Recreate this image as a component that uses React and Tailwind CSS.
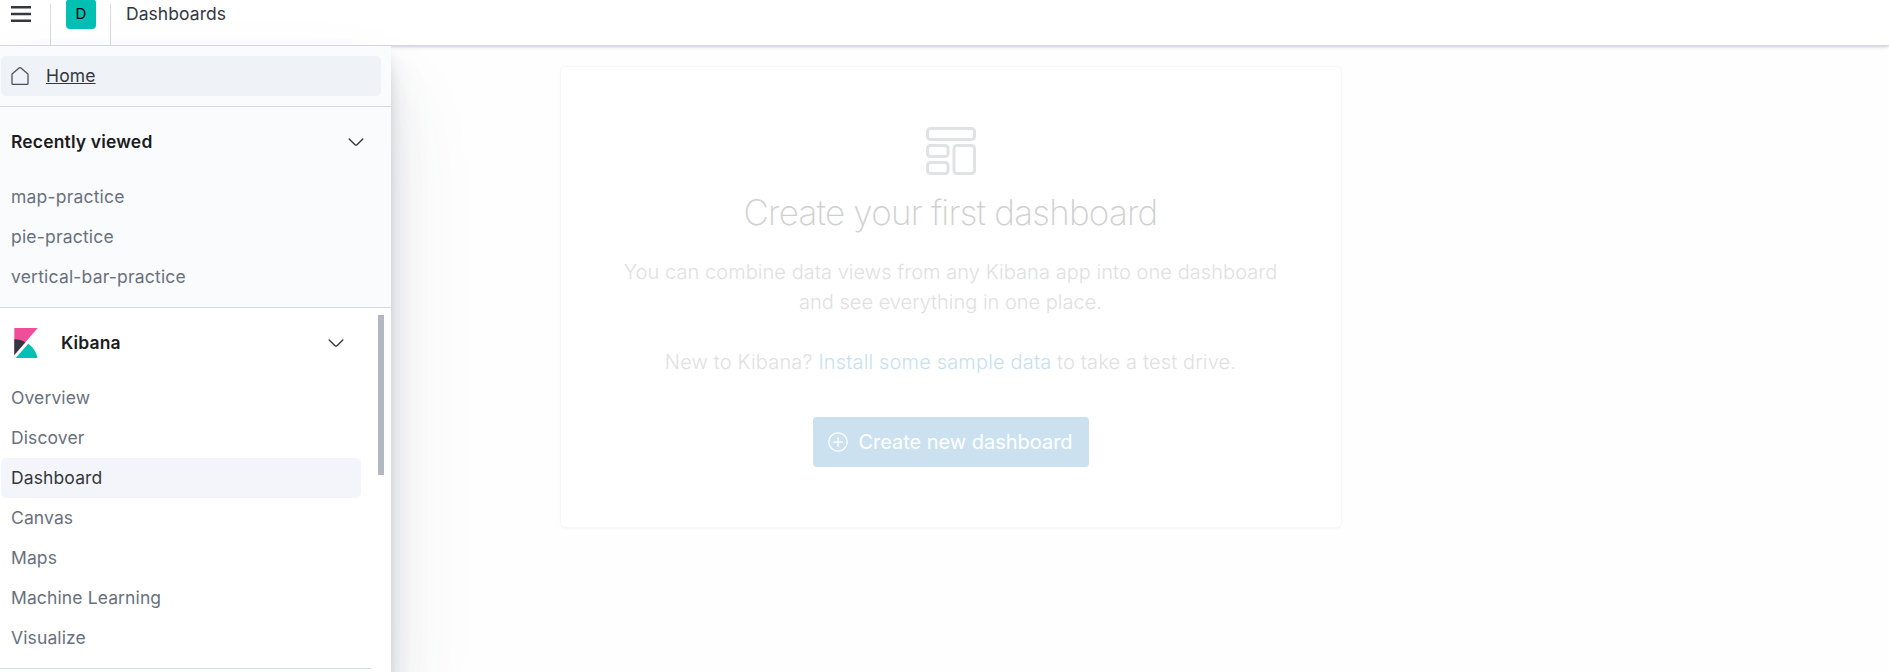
import React from "react";

const recent = ["map-practice", "pie-practice", "vertical-bar-practice"];
const apps = ["Overview", "Discover", "Dashboard", "Canvas", "Maps", "Machine Learning", "Visualize"];

function Chevron() {
  return (
    <svg className="h-5 w-5 shrink-0" viewBox="0 0 16 16" fill="#343741">
      <path fillRule="nonzero" d="M13.069 5.157 8.384 9.768a.546.546 0 0 1-.768 0L2.93 5.158a.552.552 0 0 0-.771 0 .53.53 0 0 0 0 .759l4.684 4.61c.641.631 1.672.63 2.312 0l4.684-4.61a.53.53 0 0 0 0-.76.552.552 0 0 0-.771 0Z" />
    </svg>
  );
}

function Header() {
  return (
    <header className="relative z-10 flex h-[46px] shrink-0 items-start border-b border-[#d3dae6] bg-white shadow-[0_1px_5px_-1px_rgba(152,162,179,0.4),0_2px_2px_-1px_rgba(152,162,179,0.3)]">
      <button className="flex h-[45px] w-[50px] shrink-0 items-start pl-[11px] pt-1">
        <svg className="h-5 w-5" viewBox="0 0 20 20" fill="#343741">
          <path d="M0 2h20v2.4H0zM0 8.8h20v2.4H0zM0 15.5h20v2.4H0z" />
        </svg>
      </button>
      <div className="mt-1 h-[41px] w-px bg-[#d3dae6]" />
      <div className="flex w-[59px] justify-center">
        <div className="-mt-px flex h-[30px] w-[30px] items-center justify-center rounded-[4px] bg-[#00bfb3] pl-px text-[15px] text-black">D</div>
      </div>
      <div className="mt-1 h-[41px] w-px bg-[#d3dae6]" />
      <div className="pl-[15px] text-[17.5px] leading-7 tracking-[0.06px] text-[#343741]">Dashboards</div>
    </header>
  );
}

function Sidebar() {
  return (
    <nav className="relative z-20 flex w-[391px] shrink-0 flex-col bg-white text-[17.5px] tracking-[0.12px] text-[#69707d] shadow-[0_50px_80px_0_rgba(65,78,101,0.1),0_30px_40px_0_rgba(65,78,101,0.1),0_20px_20px_0_rgba(65,78,101,0.1),0_10px_10px_0_rgba(65,78,101,0.1)]">
      <div className="h-[61px] shrink-0 border-b border-[#d3dae6] bg-[#fafbfd] pl-px pt-2.5">
        <a className="flex h-10 w-[380px] items-center rounded-[5px] bg-[#eff2f7] pl-[9px] text-[#343741]">
          <svg className="h-5 w-5" viewBox="0 0 16 16" fill="none" stroke="#4a4d57" strokeWidth="1">
            <path d="M1.6 6.5v7.4q0 .7.7.7h11.4q.7 0 .7-.7V6.5L8.5 1.4q-.5-.35-1 0Z" />
          </svg>
          <span className="pl-4 underline">Home</span>
        </a>
      </div>
      <section className="h-[201px] shrink-0 border-b border-[#d3dae6] bg-[#fafbfd]">
        <div className="flex h-[70px] items-center justify-between pl-[11px] pr-[25px] font-semibold tracking-[0.16px] text-[#1a1c21]">
          <h3>Recently viewed</h3>
          <Chevron />
        </div>
        <ul className="tracking-[0.2px]">
          {recent.map((r) => (
            <li key={r} className="flex h-10 items-center pl-[11px]">{r}</li>
          ))}
        </ul>
      </section>
      <section className="flex min-h-0 flex-1 justify-between">
        <div className="flex w-[371px] flex-col">
          <div className="flex h-[70px] shrink-0 items-center pl-[11px] pr-[25px] font-semibold text-[#1a1c21]">
            <svg className="h-[30px] w-[30px]" viewBox="0 0 32 32" fill="none">
              <path fill="#F04E98" d="M3.5 0v28.8L28.5 0z" />
              <path fill="#343741" d="M3.5 12v16.8L15.3 15.2C11.8 13.2 7.8 12 3.5 12" />
              <path fill="#00BFB3" d="M18.4 16.7 5.5 31.5l-.3.5h23.1a24.4 24.4 0 0 0-9.9-15.3" />
            </svg>
            <h3 className="flex-1 pl-5">Kibana</h3>
            <Chevron />
          </div>
          <ul className="h-[291px] shrink-0 border-b border-[#d3dae6]">
            {apps.map((a) => (
              <li key={a} className="pl-px">
                <a className={a === "Dashboard" ? "flex h-10 w-[360px] items-center rounded-[5px] bg-[#f4f5fa] pl-2.5 text-[#343741]" : "flex h-10 items-center pl-2.5"}>{a}</a>
              </li>
            ))}
          </ul>
        </div>
        <div className="mr-[7px] mt-[7px] h-40 w-1.5 bg-[#b3b7c0]" />
      </section>
    </nav>
  );
}

function EmptyPrompt() {
  return (
    <section className="ml-[169px] mt-5 flex h-[462px] w-[782px] flex-col items-center rounded-[5px] border border-[#f6f7f9] bg-white pr-px shadow-[0_2px_2px_-1px_rgba(152,162,179,0.06),0_1px_5px_-2px_rgba(152,162,179,0.06)]">
      <svg className="mt-[60px] h-[50px] w-[50px] shrink-0" viewBox="0 0 50 50" fill="none" stroke="#e1e2e4" strokeWidth="3">
        <rect x="1.5" y="1.5" width="47" height="11" rx="3" />
        <rect x="1.5" y="18.5" width="20.5" height="11" rx="3" />
        <rect x="1.5" y="35.5" width="20.5" height="11" rx="3" />
        <rect x="28" y="18.5" width="20.5" height="28" rx="3" />
      </svg>
      <h2 className="mt-[15px] text-[35px] font-extralight leading-10 tracking-[-0.77px] text-[#cfd0d1]">Create your first dashboard</h2>
      <p className="mt-[25px] w-[680px] text-center text-[20px] font-light leading-[30px] tracking-[0.06px] text-[#dfe0e3]">
        You can combine data views from any Kibana app into one dashboard<br />
        <span className="tracking-[0px]">and see everything in one place.</span>
      </p>
      <p className="mt-[30px] text-[20px] font-light leading-[30px] tracking-[0.16px] text-[#dfe0e3]">
        New to Kibana? <a className="text-[#c8dff0]">Install some sample data</a> to take a test drive.
      </p>
      <button className="mt-10 flex h-[50px] w-[276px] shrink-0 items-center justify-center gap-2.5 whitespace-nowrap rounded-[4px] bg-[#cce1f0] text-[20px] tracking-[-0.02px] text-white">
        <svg className="h-5 w-5" viewBox="0 0 20 20" fill="none" stroke="white" strokeWidth="1.25">
          <circle cx="10" cy="10" r="9.2" />
          <path d="M10 5v10M5 10h10" />
        </svg>
        Create new dashboard
      </button>
    </section>
  );
}

export default function App() {
  return (
    <div className="flex h-screen flex-col overflow-hidden bg-[#fefefe] font-['Inter',sans-serif]">
      <Header />
      <div className="flex min-h-0 flex-1">
        <Sidebar />
        <main className="flex-1">
          <EmptyPrompt />
        </main>
      </div>
    </div>
  );
}
